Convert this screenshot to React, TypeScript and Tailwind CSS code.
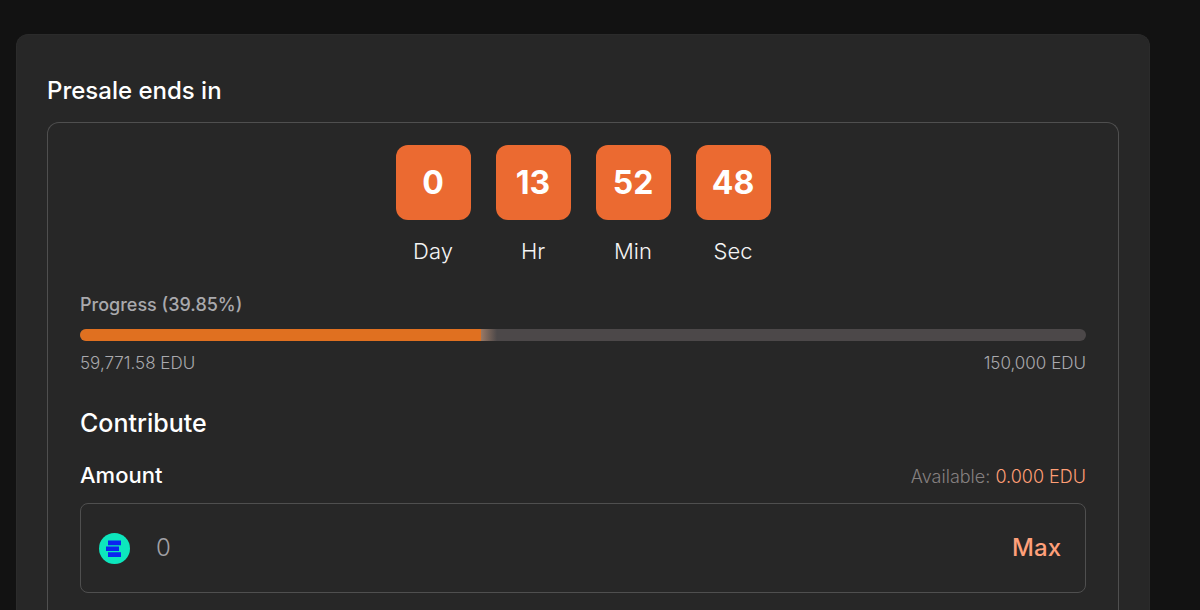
import { useState } from "react"

const content = {
    countdown: [
        { title: "Day", value: 0 },
        { title: "Hr", value: 13 },
        { title: "Min", value: 52 },
        { title: "Sec", value: 48 },
    ],
    percentage: 39.85,
    raised: "59,771.58 EDU",
    goal: "150,000 EDU",
    available: "0.000",
}

function EduIcon() {
    return (
        <svg viewBox="0 0 31 31" className="size-[31px] shrink-0" aria-hidden="true">
            <circle cx="15.5" cy="15.5" r="15.5" fill="#0de6bd" />
            <path d="M9 7.5h13v4.8H9zM7 13.5h13v4.5H7zM9 19.3h13v4.6H9z" fill="#0b24f0" />
        </svg>
    )
}

function Countdown() {
    return (
        <ul className="flex justify-center gap-[25px]">
            {content.countdown.map((item) => (
                <li key={item.title} className="flex flex-col items-center gap-4">
                    <div className="flex size-[75px] items-center justify-center rounded-xl bg-[#eb6a31] text-[32px] font-bold text-white">
                        {item.value}
                    </div>
                    <div className="text-[22px] leading-[30px] font-light text-[#f4f4f4]">{item.title}</div>
                </li>
            ))}
        </ul>
    )
}

function ProgressBar({ percentage }: { percentage: number }) {
    return (
        <div
            className="my-3 flex h-3 overflow-hidden rounded-full bg-[#4c4849]"
            role="progressbar"
            aria-label="Progress"
            aria-valuenow={percentage}
        >
            <div className="bg-[#e07020]" style={{ width: `${percentage}%` }} />
            <div className="w-4 bg-linear-to-r from-[#9a7965] to-[#4c4849]" />
        </div>
    )
}

export default function App() {
    const [amount, setAmount] = useState("")

    return (
        <main className="flex min-h-screen bg-[#121212] pt-[34px] pr-[50px] pl-4 font-['Inter',sans-serif] text-white">
            <section className="flex flex-1 flex-col rounded-t-xl border border-b-0 border-[#2b2b2b] bg-[#272727] px-[30px] pt-10">
                <h2 className="mb-[15px] text-2xl font-medium">Presale ends in</h2>
                <div className="flex-1 rounded-t-xl border border-b-0 border-[#4f4f4f] px-8 pt-[22px] pb-4">
                    <Countdown />

                    <div className="mt-[27px] text-lg leading-6 font-medium text-[#a9a9ad]">
                        Progress ({content.percentage}%)
                    </div>
                    <ProgressBar percentage={content.percentage} />
                    <div className="-mt-[2px] flex justify-between text-[17px] leading-6 font-light text-[#a9a9ad]">
                        <span>{content.raised}</span>
                        <span>{content.goal}</span>
                    </div>

                    <h3 className="mt-8 text-[25px] leading-8 font-medium">Contribute</h3>
                    <div className="mt-5 mb-3 flex items-end justify-between">
                        <label htmlFor="amount" className="text-[22px] leading-8 font-medium">Amount</label>
                        <div className="text-lg font-light text-[#858080]">
                            Available: <span className="text-[#ff9e75]">{content.available} EDU</span>
                        </div>
                    </div>
                    <div className="flex h-[90px] items-center rounded-lg border border-[#4f4f4f] pr-6 pl-[18px]">
                        <EduIcon />
                        <input
                            id="amount"
                            type="text"
                            inputMode="decimal"
                            placeholder="0"
                            value={amount}
                            onChange={(e) => setAmount(e.target.value)}
                            className="ml-[26px] min-w-0 flex-1 bg-transparent text-2xl font-light outline-none placeholder:text-[#a1a1a6]"
                        />
                        <button type="button" onClick={() => setAmount(content.available)} className="text-2xl font-medium text-[#ffa07a]">
                            Max
                        </button>
                    </div>
                </div>
            </section>
        </main>
    )
}
